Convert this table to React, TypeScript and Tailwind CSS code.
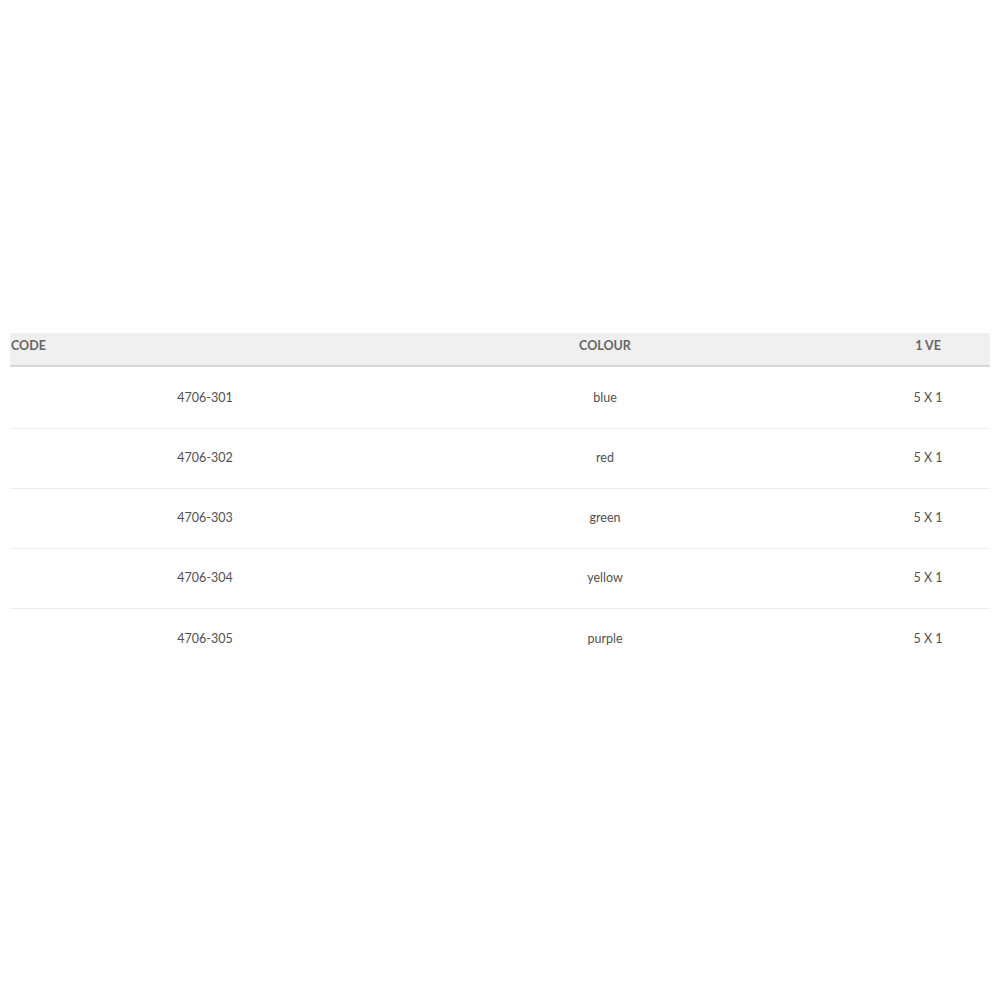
const ROWS = [
  { code: '4706-301', colour: 'blue', ve: '5 X 1' },
  { code: '4706-302', colour: 'red', ve: '5 X 1' },
  { code: '4706-303', colour: 'green', ve: '5 X 1' },
  { code: '4706-304', colour: 'yellow', ve: '5 X 1' },
  { code: '4706-305', colour: 'purple', ve: '5 X 1' },
]

export default function App() {
  return (
    <div className="bg-white min-h-screen w-[1000px] pt-[333px] px-[10px]" style={{ fontFamily: 'Lato, "Open Sans", sans-serif' }}>
      {/* Header */}
      <div className="grid grid-cols-[390px_410px_180px] h-[34px] bg-[#efefef] border-b-2 border-[#d6d6d6] text-[12.5px] font-bold text-[#666]">
        <div className="pl-[1px] pt-[4px]">CODE</div>
        <div className="text-center pt-[4px]">COLOUR</div>
        <div className="text-center pl-[56px] pt-[4px]">1 VE</div>
      </div>

      {/* Rows */}
      {ROWS.map((r, i) => (
        <div
          key={r.code}
          className={`grid grid-cols-[390px_410px_180px] items-center text-[12.5px] text-[#505050] ${
            i === 0 ? 'h-[62px] pt-[1px]' : 'h-[60px]'
          } ${i < ROWS.length - 1 ? 'border-b border-[#ededed]' : ''}`}
        >
          <div className="text-center">{r.code}</div>
          <div className="text-center">{r.colour}</div>
          <div className="text-center pl-[56px]">{r.ve}</div>
        </div>
      ))}
    </div>
  )
}
